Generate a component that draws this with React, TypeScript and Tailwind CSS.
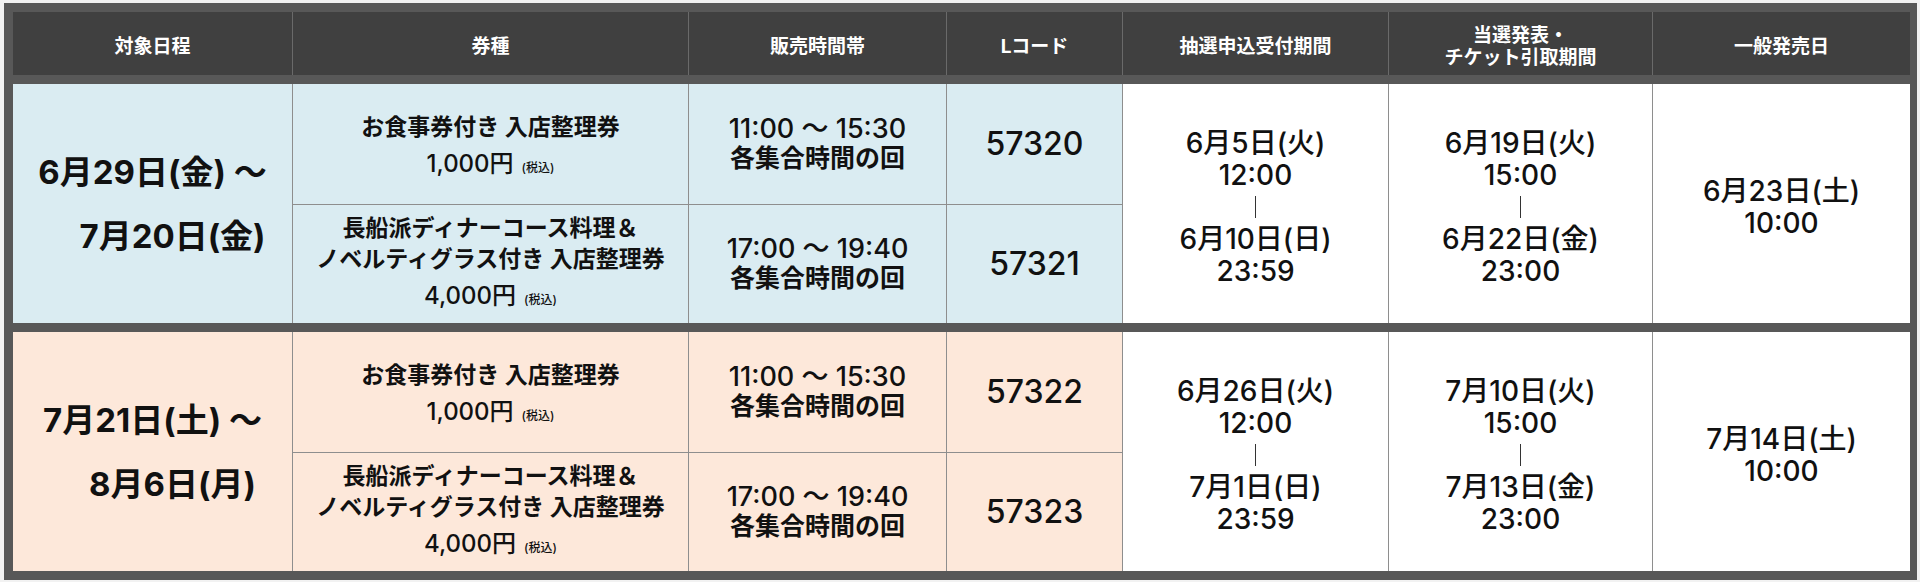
import React from "react";

const cols = "grid grid-cols-[279px_395px_257px_175px_265px_263px_257px]";

interface Sub {
  name: string[];
  price: string;
  time: string;
  code: string;
}

interface Group {
  bg: string;
  from: string;
  to: string;
  subs: Sub[];
  lotFrom: string[];
  lotTo: string[];
  winFrom: string[];
  winTo: string[];
  general: string[];
}

const subsFor = (c1: string, c2: string): Sub[] => [
  {
    name: ["お食事券付き 入店整理券"],
    price: "1,000円",
    time: "11:00 〜 15:30",
    code: c1,
  },
  {
    name: ["長船派ディナーコース料理＆", "ノベルティグラス付き 入店整理券"],
    price: "4,000円",
    time: "17:00 〜 19:40",
    code: c2,
  },
];

const groups: Group[] = [
  {
    bg: "bg-[#daecf2]",
    from: "6月29日(金) 〜",
    to: "7月20日(金)",
    subs: subsFor("57320", "57321"),
    lotFrom: ["6月5日(火)", "12:00"],
    lotTo: ["6月10日(日)", "23:59"],
    winFrom: ["6月19日(火)", "15:00"],
    winTo: ["6月22日(金)", "23:00"],
    general: ["6月23日(土)", "10:00"],
  },
  {
    bg: "bg-[#fde8da]",
    from: "7月21日(土) 〜",
    to: "8月6日(月)",
    subs: subsFor("57322", "57323"),
    lotFrom: ["6月26日(火)", "12:00"],
    lotTo: ["7月1日(日)", "23:59"],
    winFrom: ["7月10日(火)", "15:00"],
    winTo: ["7月13日(金)", "23:00"],
    general: ["7月14日(土)", "10:00"],
  },
];

const headers = [
  ["対象日程"],
  ["券種"],
  ["販売時間帯"],
  ["Lコード"],
  ["抽選申込受付期間"],
  ["当選発表・", "チケット引取期間"],
  ["一般発売日"],
];

// 期間セル: 開始 / 縦線 / 終了
const Period = ({ from, to }: { from: string[]; to: string[] }) => (
  <div className="bg-white flex flex-col items-center justify-center pt-[6px] text-center text-[28px] font-medium leading-[32px]">
    {from.map((t) => (
      <div key={t}>{t}</div>
    ))}
    <div className="h-[32px] flex items-center">
      <div className="w-px h-[22px] bg-[#333]" />
    </div>
    {to.map((t) => (
      <div key={t}>{t}</div>
    ))}
  </div>
);

const GroupRows = ({ g }: { g: Group }) => (
  <div className={`${cols} grid-rows-[120px_118px] gap-px bg-[#8e8e8e]`}>
    {/* 対象日程 */}
    <div
      className={`${g.bg} row-span-2 col-start-1 row-start-1 flex flex-col items-center justify-center text-[33px] font-bold leading-[64px]`}
    >
      <div>{g.from}</div>
      <div className="pl-[40px]">{g.to}</div>
    </div>

    {g.subs.map((s, i) => (
      <React.Fragment key={s.code}>
        <div
          className={`${g.bg} col-start-2 ${i === 0 ? "row-start-1 pt-[6px]" : "row-start-2"} flex flex-col items-center justify-center text-center leading-[31px]`}
        >
          {s.name.map((n) => (
            <div key={n} className="text-[23px] font-bold">
              {n}
            </div>
          ))}
          <div className="mt-[5px] text-[24px] font-medium">
            {s.price}
            <span className="ml-[8px] text-[12px]">(税込)</span>
          </div>
        </div>
        <div
          className={`${g.bg} col-start-3 ${i === 0 ? "row-start-1" : "row-start-2"} flex flex-col items-center justify-center text-center`}
        >
          <div className="text-[27px] font-medium leading-[28px]">{s.time}</div>
          <div className="text-[25px] font-bold leading-[30px]">各集合時間の回</div>
        </div>
        <div
          className={`${g.bg} col-start-4 ${i === 0 ? "row-start-1" : "row-start-2"} flex items-center justify-center text-[32px] font-medium`}
        >
          {s.code}
        </div>
      </React.Fragment>
    ))}

    <div className="col-start-5 row-start-1 row-span-2 grid">
      <Period from={g.lotFrom} to={g.lotTo} />
    </div>
    <div className="col-start-6 row-start-1 row-span-2 grid">
      <Period from={g.winFrom} to={g.winTo} />
    </div>
    <div className="col-start-7 row-start-1 row-span-2 bg-white flex flex-col items-center justify-center pt-[6px] text-[28px] font-medium leading-[32px]">
      {g.general.map((t) => (
        <div key={t}>{t}</div>
      ))}
    </div>
  </div>
);

export default function App() {
  return (
    <div className="min-h-[582px] w-[1920px] bg-[#f2f2f2] pt-[3px] pl-[4px] font-['Inter','Noto_Sans_CJK_JP',sans-serif] text-[#111]">
      <div className="w-[1913px] bg-[#585858] pt-[9px] pb-[9px] pl-[9px] pr-[7px] flex flex-col gap-[9px]">
        <div className={`${cols} h-[63px] gap-px bg-[#6a6a6a]`}>
          {headers.map((h) => (
            <div
              key={h[0]}
              className="bg-[#404040] flex flex-col items-center justify-center pt-[6px] text-center text-white text-[19px] font-bold leading-[22px]"
            >
              {h.map((l) => (
                <div key={l}>{l}</div>
              ))}
            </div>
          ))}
        </div>
        {groups.map((g) => (
          <GroupRows key={g.from} g={g} />
        ))}
      </div>
    </div>
  );
}
